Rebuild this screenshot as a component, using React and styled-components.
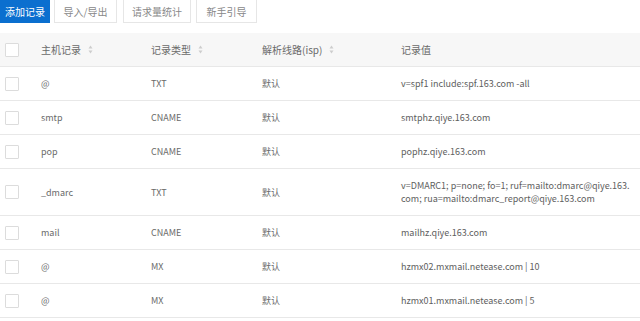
import React from 'react'
import styled, { createGlobalStyle } from 'styled-components'

const Global = createGlobalStyle`
    body {
        margin: 0;
        background: #fff;
        font-family: "Noto Sans CJK SC", "Noto Sans", sans-serif;
        font-size: 10px;
        color: #666;
    }
`

const Page = styled.div`
    width: 640px;
    height: 321px;
    overflow: hidden;
`

const Toolbar = styled.div`
    display: flex;
    gap: 5px;
    height: 23px;
    margin-bottom: 10px;
`

const Button = styled.button`
    height: 23px;
    padding: 0;
    width: ${p => p.w}px;
    margin-left: ${p => p.ml || 0}px;
    font-family: inherit;
    font-size: 10px;
    border-radius: 0;
    border: 1px solid ${p => p.primary ? '#0b6fcf' : '#e6e6e6'};
    background: ${p => p.primary ? '#0b6fcf' : '#fff'};
    color: ${p => p.primary ? '#fff' : '#888'};
    border-top: none;
`

const Row = styled.div`
    display: grid;
    grid-template-columns: 41px 110px 111px 139px 1fr;
    align-items: center;
    min-height: ${p => p.h || 33}px;
    background: ${p => p.head ? '#f7f7f7' : '#fff'};
    border-bottom: 1px solid #e8e8e8;
    font-size: ${p => p.head ? 10 : 9}px;
    color: #6a6a6a;
`

const Cell = styled.div`
    display: flex;
    align-items: center;
    gap: 7px;
    line-height: 13px;
`

const Value = styled.div`
    line-height: 13px;
    padding-right: 10px;
    word-break: break-all;
    color: #5e5e5e;
`

const Check = styled.span`
    display: block;
    width: 12px;
    height: 12px;
    margin-left: 5px;
    border: 1px solid #dcdcdc;
    border-radius: 1px;
    background: #fff;
`

const SortIcon = () => (
    <svg width="5" height="9" viewBox="0 0 5 9">
        <path d="M2.5 0.5 L4.5 3.5 L0.5 3.5 Z" fill="#cdcdcd" />
        <path d="M2.5 8.5 L4.5 5.5 L0.5 5.5 Z" fill="#cdcdcd" />
    </svg>
)

const records = [
    ['@', 'TXT', '默认', 'v=spf1 include:spf.163.com -all'],
    ['smtp', 'CNAME', '默认', 'smtphz.qiye.163.com'],
    ['pop', 'CNAME', '默认', 'pophz.qiye.163.com'],
    ['_dmarc', 'TXT', '默认', 'v=DMARC1; p=none; fo=1; ruf=mailto:dmarc@qiye.163.com; rua=mailto:dmarc_report@qiye.163.com', 46],
    ['mail', 'CNAME', '默认', 'mailhz.qiye.163.com'],
    ['@', 'MX', '默认', 'hzmx02.mxmail.netease.com | 10'],
    ['@', 'MX', '默认', 'hzmx01.mxmail.netease.com | 5'],
]

export default function App() {
    return (
        <Page>
            <Global />
            <Toolbar>
                <Button primary w={50}>添加记录</Button>
                <Button w={63} ml={-1}>导入/导出</Button>
                <Button w={68} ml={1}>请求量统计</Button>
                <Button w={61}>新手引导</Button>
            </Toolbar>
            <Row head>
                <Cell><Check /></Cell>
                <Cell>主机记录 <SortIcon /></Cell>
                <Cell>记录类型 <SortIcon /></Cell>
                <Cell>解析线路(isp) <SortIcon /></Cell>
                <Cell>记录值</Cell>
            </Row>
            {records.map((r, i) => (
                <Row key={i} h={r[4]}>
                    <Cell><Check /></Cell>
                    <Cell>{r[0]}</Cell>
                    <Cell>{r[1]}</Cell>
                    <Cell>{r[2]}</Cell>
                    <Value>{r[3]}</Value>
                </Row>
            ))}
        </Page>
    )
}
